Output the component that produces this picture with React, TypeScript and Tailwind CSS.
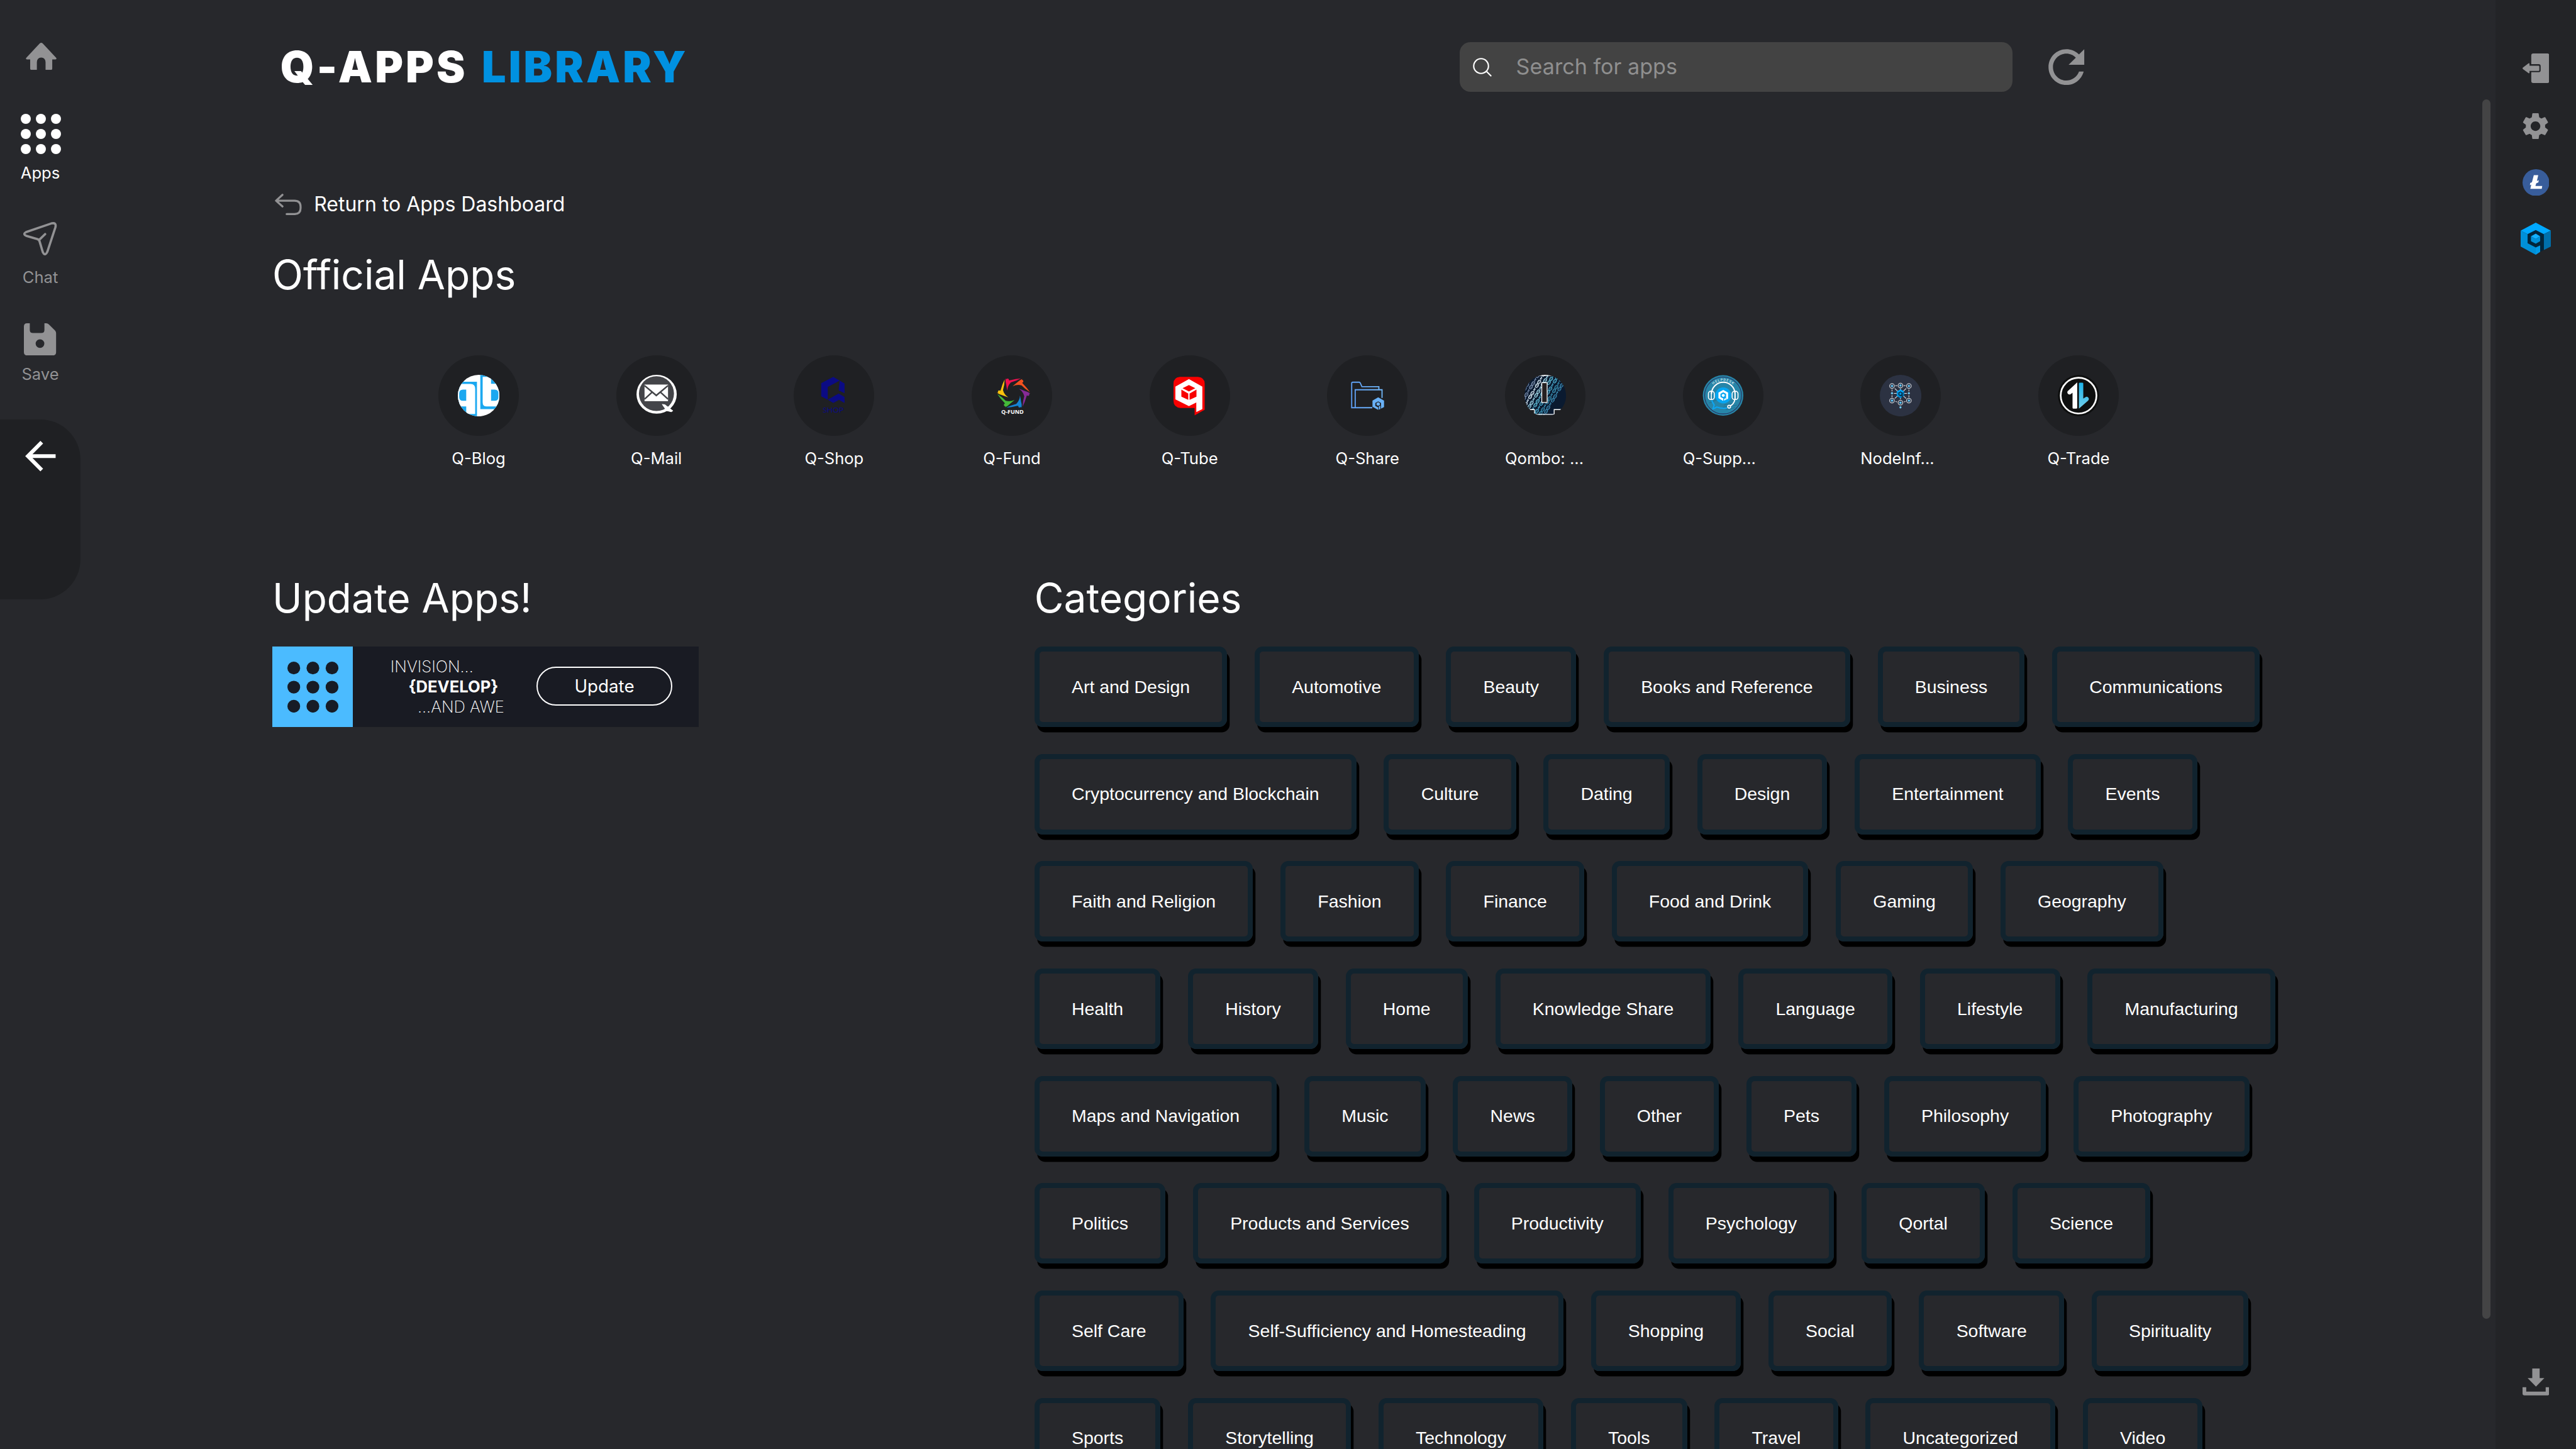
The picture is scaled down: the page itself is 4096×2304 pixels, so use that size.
import React from "react";

/*
 * The layout is designed on a 1920 x 1080 grid. The spacing unit set on the
 * root element makes one Tailwind spacing step equal to one grid pixel.
 */

const categories = [
  "Art and Design",
  "Automotive",
  "Beauty",
  "Books and Reference",
  "Business",
  "Communications",
  "Cryptocurrency and Blockchain",
  "Culture",
  "Dating",
  "Design",
  "Entertainment",
  "Events",
  "Faith and Religion",
  "Fashion",
  "Finance",
  "Food and Drink",
  "Gaming",
  "Geography",
  "Health",
  "History",
  "Home",
  "Knowledge Share",
  "Language",
  "Lifestyle",
  "Manufacturing",
  "Maps and Navigation",
  "Music",
  "News",
  "Other",
  "Pets",
  "Philosophy",
  "Photography",
  "Politics",
  "Products and Services",
  "Productivity",
  "Psychology",
  "Qortal",
  "Science",
  "Self Care",
  "Self-Sufficiency and Homesteading",
  "Shopping",
  "Social",
  "Software",
  "Spirituality",
  "Sports",
  "Storytelling",
  "Technology",
  "Tools",
  "Travel",
  "Uncategorized",
  "Video",
];

/* ---------- Navigation icons ---------- */

function HomeIcon() {
  return (
    <svg viewBox="0 0 23 20.3" className="h-20.25 w-23 fill-[#929294]">
      <path d="M11.5 0 Q12 0 12.6 .5 L22.7 11.3 Q23.3 12.3 22.2 12.4 H19.75 V19.3 Q19.75 20.3 18.75 20.3 H14.75 V14.6 Q14.6 11 11.5 11 Q8.4 11 8.25 14.6 V20.3 H4.25 Q3.25 20.3 3.25 19.3 V12.4 H.8 Q-.3 12.3 .3 11.3 L10.4 .5 Q11 0 11.5 0Z" />
    </svg>
  );
}

function DotGrid({ className }: { className: string }) {
  const steps = [0, 11.25, 22.5];
  return (
    <svg viewBox="0 0 30 30" className={className}>
      {steps.map((y) =>
        steps.map((x) => <circle key={`${x}-${y}`} cx={x + 3.75} cy={y + 3.75} r="3.75" />)
      )}
    </svg>
  );
}

function ChatIcon() {
  return (
    <svg viewBox="0 0 25 25" className="size-25 fill-none stroke-[#929294]" strokeWidth="1.7" strokeLinejoin="round" strokeLinecap="round">
      <path d="M2.1 7.5 L20.8 1.1 Q25 .1 23.9 4.1 L17.9 22.3 Q16.3 25.7 14.6 22.6 L12.2 14.6 Q11.8 13.2 10.6 12.8 L2.2 10.3 Q-.6 8.9 2.1 7.5Z M11.9 13.3 L16.3 9" />
    </svg>
  );
}

function SaveIcon() {
  return (
    <svg viewBox="0 0 24 24" className="size-24 fill-[#929294]" fillRule="evenodd">
      <path d="M2.4 0 H4.4 V5 Q4.4 7.3 6.8 7.3 H12.9 Q15.3 7.3 15.3 5 V0 H16.6 Q17.8 0 18.7 .9 L23.2 5.4 Q24 6.2 24 7.4 V21.6 Q24 24 21.6 24 H2.4 Q0 24 0 21.6 V2.4 Q0 0 2.4 0Z M12 11.9 a3.25 3.25 0 1 0 0 6.5 a3.25 3.25 0 1 0 0 -6.5Z" />
    </svg>
  );
}

function BackArrow() {
  return (
    <svg viewBox="0 0 24 24" className="size-34 fill-white">
      <path d="M20 11H7.83l5.59-5.59L12 4l-8 8 8 8 1.41-1.41L7.83 13H20v-2z" />
    </svg>
  );
}

function ReturnIcon() {
  return (
    <svg viewBox="0 0 20 16" className="h-16 w-20 fill-none stroke-[#929294]" strokeWidth="1.5" strokeLinecap="round" strokeLinejoin="round">
      <path d="M5.7 .8 L.9 5.2 L5.7 9.5 M.9 5.2 H14.6 Q19.2 5.2 19.2 9.6 V10.8 Q19.2 15.2 14.6 15.2 H8.8" />
    </svg>
  );
}

function SearchIcon() {
  return (
    <svg viewBox="0 0 14 14" className="size-14 fill-none stroke-white" strokeWidth="1" strokeLinecap="round">
      <circle cx="6.1" cy="6.1" r="5.5" />
      <path d="M10 10 L13.4 13.4" />
    </svg>
  );
}

function RefreshIcon() {
  return (
    <svg viewBox="0 0 24 24" className="size-40 fill-[#929294]">
      <path d="M17.65 6.35C16.2 4.9 14.21 4 12 4c-4.42 0-7.99 3.58-7.99 8s3.57 8 7.99 8c3.73 0 6.84-2.55 7.73-6h-2.08c-.82 2.33-3.04 4-5.65 4-3.31 0-6-2.69-6-6s2.69-6 6-6c1.66 0 3.14.69 4.22 1.78L13 11h7V4l-2.35 2.35z" />
    </svg>
  );
}

function LogoutIcon() {
  return (
    <svg viewBox="0 0 20 22" className="h-22 w-20 fill-[#929294]">
      <path d="M8 0 H18.5 Q20 0 20 1.5 V20.5 Q20 22 18.5 22 H8 Q6.5 22 6.5 20.5 V14 H12.1 Q13.5 14 13.5 12.6 V9.4 Q13.5 8 12.1 8 H6.5 V1.5 Q6.5 0 8 0Z" />
      <path d="M.25 10.5 L4.4 7.4 Q5.2 7 5.2 7.8 V9.2 H12 Q12.5 9.2 12.5 9.7 V12.5 Q12.5 13 12 13 H5.2 V14.2 Q5.2 15 4.4 14.7 L.25 11.6 Q-.2 11 .25 10.5Z" />
    </svg>
  );
}

function SettingsIcon() {
  return (
    <svg viewBox="0 0 24 24" className="size-24 fill-[#929294]">
      <path d="M19.14 12.94c.04-.3.06-.61.06-.94 0-.32-.02-.64-.07-.94l2.03-1.58c.18-.14.23-.41.12-.61l-1.92-3.32c-.12-.22-.37-.29-.59-.22l-2.39.96c-.5-.38-1.03-.7-1.62-.94l-.36-2.54c-.04-.24-.24-.41-.48-.41h-3.84c-.24 0-.43.17-.47.41l-.36 2.54c-.59.24-1.13.57-1.62.94l-2.39-.96c-.22-.08-.47 0-.59.22L2.74 8.87c-.12.21-.08.47.12.61l2.03 1.58c-.05.3-.09.63-.09.94s.02.64.07.94l-2.03 1.58c-.18.14-.23.41-.12.61l1.92 3.32c.12.22.37.29.59.22l2.39-.96c.5.38 1.03.7 1.62.94l.36 2.54c.05.24.24.41.48.41h3.84c.24 0 .44-.17.47-.41l.36-2.54c.59-.24 1.13-.56 1.62-.94l2.39.96c.22.08.47 0 .59-.22l1.92-3.32c.12-.22.07-.47-.12-.61l-2.01-1.58zM12 15.6c-1.98 0-3.6-1.62-3.6-3.6s1.62-3.6 3.6-3.6 3.6 1.62 3.6 3.6-1.62 3.6-3.6 3.6z" />
    </svg>
  );
}

function LitecoinIcon() {
  return (
    <svg viewBox="0 0 20 20" className="size-20">
      <circle cx="10" cy="10" r="10" fill="#385d9b" />
      <path fill="#fff" d="M8.4 4.5 H11.7 L10.7 8.8 L12.1 8.2 L11.8 9.8 L10.2 10.5 L9.6 12.6 H14.7 L14.3 14.7 H5.8 L6.5 11.5 L5.5 11.9 L5.7 10.3 L7 9.7Z" />
    </svg>
  );
}

function QortalShapes() {
  return (
    <g>
      <path fill="#02253b" d="M5.2 8.6 L11.3 5.3 L17.4 8.6 V20.4 L14.6 21.9 V17 L11.3 18.7 L5.2 15.4Z" />
      <path fill="#00a8ff" d="M0 6 L11.3 0 L22.6 6 L17.3 8.6 L11.3 5.5 L5.2 8.6Z" />
      <path fill="#0090d8" d="M0 6 L5.2 8.6 V15.4 L11.3 18.6 V24 L0 17.8Z" />
      <path fill="#009ae8" d="M11.3 18.6 L14.6 17 V21.9 L11.3 24Z" />
      <path fill="#0070ac" d="M22.6 6 V17.8 L17.4 20.4 V8.6Z" />
      <path fill="#12b0ff" d="M7.7 10.2 L11.3 8.2 L14.6 10.2 L11.3 12.2Z" />
      <path fill="#0090d8" d="M7.7 10.2 L11.3 12.2 L14.6 10.2 V13.8 L11.3 15.7 L7.7 13.8Z" />
    </g>
  );
}

function QortalIcon() {
  return (
    <svg viewBox="0 0 22.6 24" className="h-24 w-22.5">
      <QortalShapes />
    </svg>
  );
}

function DownloadIcon() {
  return (
    <svg viewBox="0 0 20 20" className="size-20 fill-[#929294]">
      <path d="M7.25 0 H12.75 V7.2 H16.25 L10 13.5 L3.8 7.2 H7.25Z" />
      <path d="M0 14 H2.75 V17.25 H17.25 V14 H20 V18.6 Q20 20 18.6 20 H1.4 Q0 20 0 18.6Z" />
    </svg>
  );
}

/* ---------- App logos, each drawn on a 124 x 124 field ---------- */

function Logo({ children }: { children: React.ReactNode }) {
  return (
    <svg viewBox="0 0 124 124" className="size-31">
      {children}
    </svg>
  );
}

function BlogLogo() {
  return (
    <Logo>
      <clipPath id="blog-clip">
        <circle cx="62" cy="62" r="62" />
      </clipPath>
      <g clipPath="url(#blog-clip)">
        <rect width="124" height="124" fill="#fff" />
        <path fill="#1ba8f0" d="M0 20.7 H57 V124 H0Z" />
        <path fill="#fff" d="M0 27.3 H38 Q51.7 27.3 51.7 42 V116.5 H25 V94 H0Z" />
        <path fill="#1ba8f0" d="M25 44.3 H15 Q4 44.3 4 56 V66 Q4 77.3 15 77.3 H25Z" />
        <path fill="#1ba8f0" d="M67 0 H124 V102.3 H67Z" />
        <path fill="#fff" d="M74 6.3 H99 V26.7 H124 V94.3 H86 Q74 94.3 74 82Z" />
        <path fill="#1ba8f0" d="M99 44.3 H110 Q121 44.3 121 56 V66 Q121 77.3 110 77.3 H99Z" />
      </g>
    </Logo>
  );
}

function MailLogo() {
  return (
    <Logo>
      <ellipse cx="62" cy="58" rx="60" ry="58" fill="#fff" />
      <ellipse cx="61.5" cy="56" rx="52.3" ry="52" fill="#444549" />
      <rect x="26" y="29" width="70" height="49.5" fill="#fff" />
      <path d="M26 32 L61 61.5 L96 32 M26 72.5 L49 51.5 M96 72.5 L73 51.5" fill="none" stroke="#444549" strokeWidth="4.6" />
      <path d="M79 88 L86 89 L110 107 L106 110 L92 107Z" fill="#fff" stroke="#fff" strokeWidth="2" strokeLinejoin="round" />
    </Logo>
  );
}

function ShopLogo() {
  return (
    <Logo>
      <g fill="#0b0b84">
        <path d="M60 6 L79 17.5 L43.5 36 V74 L24 64 V25Z" />
        <path d="M79 17.5 L93.5 26 V55 L76 46Z" />
        <path d="M43.5 74 L76 56 L93.5 66 V84 L77 74.5 L60 84Z" />
        <text x="28.5" y="112" fontSize="22.5" textLength="62" lengthAdjust="spacingAndGlyphs" className="font-['Lato']">
          SHOP
        </text>
      </g>
    </Logo>
  );
}

const fundFigures = [
  { color: "#ee1150", turn: 0 },
  { color: "#f4511e", turn: 60 },
  { color: "#862a96", turn: 120 },
  { color: "#1583d3", turn: 180 },
  { color: "#43b93a", turn: 240 },
  { color: "#fcc20d", turn: 300 },
];

function FundLogo() {
  return (
    <Logo>
      {fundFigures.map((figure) => (
        <g key={figure.color} fill={figure.color} transform={`rotate(${figure.turn} 67 54.5)`}>
          <circle cx="49" cy="15.5" r="4.2" />
          <path d="M89 11 Q72 12 58 16 Q48 19 43 11 Q42 22 45 30 Q46 38 48 47 Q49 32 59 22.5 Q74 19 89 11Z" />
        </g>
      ))}
      <text x="30" y="116.8" fill="#fff" fontSize="16.5" fontWeight="700" textLength="67" lengthAdjust="spacingAndGlyphs" className="font-['Open_Sans']">
        Q-FUND
      </text>
    </Logo>
  );
}

function TubeLogo() {
  return (
    <Logo>
      <path fill="#f80000" d="M32 6 H86 Q106 8 106 26 V104 L76 121 V99 H34 Q13 97 13 78 V26 Q13 8 32 6Z" />
      <path fill="#fff" d="M59 12.7 L99 35 V102 L81 111 V82.7 L59 93.5 L18.6 73 V35Z" />
      <path fill="#f80000" d="M59 30.5 L78 40 L59 49.5 L40 40Z M36.5 44 L57 55.7 V74.5 L36.5 65Z M81.5 44 L61 55.7 V74.5 L81.5 65Z" />
    </Logo>
  );
}

function ShareLogo() {
  return (
    <Logo>
      <linearGradient id="share-stroke" x1="0" y1="0" x2="124" y2="0" gradientUnits="userSpaceOnUse">
        <stop offset="0" stopColor="#5c9cf5" />
        <stop offset="1" stopColor="#74bcfa" />
      </linearGradient>
      <g fill="none" stroke="url(#share-stroke)" strokeWidth="3.4">
        <path d="M77 98 H15.5 V25 Q15.5 22 18.5 22 H38 Q40 22 41 24 L46 35.5 H96.5 V44" />
        <path d="M26 98 V44.5 H106 V69" />
      </g>
      <path fill="#69b1f7" fillRule="evenodd" d="M94.5 67 L112 77 V96 L103 101 V84 L94.5 79 L86 84 V93 L94.5 97 V104.5 L77.5 95 V77Z" />
      <path fill="#69b1f7" d="M94.5 81.5 L99.5 84.5 V90 L94.5 92.5 L89.5 90 V84.5Z M96.5 94 L101 92 V101.5 L96.5 104Z" />
    </Logo>
  );
}

const chainLines = [
  { x: -26, tint: "#6f83a6" },
  { x: -13, tint: "#8396b5" },
  { x: 0, tint: "#e6f6ff" },
  { x: 13, tint: "#a9e3f2" },
  { x: 26, tint: "#63c6e0" },
  { x: 39, tint: "#4fb4d6" },
  { x: 52, tint: "#3c96b8" },
  { x: 63, tint: "#3f8fb8" },
];

function QomboLogo() {
  const links = [0, 1, 2, 3, 4, 5, 6, 7, 8, 9, 10, 11, 12];
  return (
    <Logo>
      <clipPath id="qombo-round">
        <circle cx="62" cy="62" r="62" />
      </clipPath>
      <clipPath id="qombo-body">
        <path d="M0 0 H124 V105 H90 V120 H28.5 V105 H0Z" />
      </clipPath>
      <g clipPath="url(#qombo-round)">
        <g clipPath="url(#qombo-body)">
          <rect width="124" height="124" fill="#0a1a30" />
          <g transform="translate(54 4) rotate(31)" fill="none" strokeWidth="2.2">
            {chainLines.map((line, row) =>
              links.map((link) =>
                (link + row) % 3 === 2 ? (
                  <path key={`${row}-${link}`} stroke={line.tint} d={`M${line.x - 3} ${link * 13 - 36} l4 3 l-3 3 l4 3`} />
                ) : (
                  <g key={`${row}-${link}`} stroke={line.tint}>
                    <ellipse cx={line.x} cy={link * 13 - 32} rx="3.8" ry="5.6" />
                    <path d={`M${line.x - 1} ${link * 13 - 33} l2 2`} />
                  </g>
                )
              )
            )}
          </g>
          <rect x="0" y="0" width="124" height="3.2" fill="#fff" />
          <path d="M0 103.5 H29.7 V118 H88.5 V103.5 H124" fill="none" stroke="#fff" strokeWidth="2.6" />
        </g>
        <rect x="51.6" y="23.4" width="16" height="59" fill="#242021" stroke="#fff" strokeWidth="2.4" />
      </g>
    </Logo>
  );
}

function SupportLogo() {
  return (
    <Logo>
      <circle cx="61.5" cy="61.5" r="60.5" fill="#2785a8" />
      <circle cx="61.5" cy="61.5" r="55" fill="none" stroke="#28305c" strokeWidth="2" />
      <path d="M64 90 L96 84 M60 97 L104 90 M70 104 L98 98 M20 84 L44 74" stroke="#1c6a8c" strokeWidth="1.4" />
      <path id="helpdesk-arc" d="M17.5 62 A44 44 0 0 1 105.5 62" fill="none" />
      <text fill="#fff" fontSize="10" textAnchor="middle" className="font-['Roboto']">
        <textPath href="#helpdesk-arc" startOffset="50%" textLength="64">
          HELPDESK
        </textPath>
      </text>
      <path d="M27 48 V57 A35 35 0 0 1 97 57 V72 Q94 88 82 93" fill="none" stroke="#fff" strokeWidth="3.6" />
      <g fill="none" stroke="#fff" strokeWidth="3">
        <rect x="17.8" y="49" width="17.5" height="24.5" rx="7" />
        <path d="M26.5 49 V73" />
        <rect x="88.5" y="49" width="17.5" height="24.5" rx="7" />
        <path d="M97.3 49 V73" />
        <circle cx="79.5" cy="95" r="4.2" fill="#2785a8" />
      </g>
      <path d="M27.5 76 Q32 86 35 90 L31 102 Q40 98 43 96 Q56 101 73 99" fill="none" stroke="#0ea5f0" strokeWidth="4" strokeLinejoin="round" />
      <circle cx="62" cy="61.3" r="24" fill="#06a6f2" />
      <path fill="#fff" d="M62 45 L76.5 53 V71 L70.5 74.5 V56.5 L62 52 L53.7 56.5 V66 L62 70.5 V78 L47.7 69.5 V53Z M64.5 72 L69.5 69 V74.5 L64.5 77Z" />
      <path fill="#fff" d="M62 56.5 L66.3 59 V63.5 L62 66 L57.7 63.5 V59Z" />
    </Logo>
  );
}

const nodeRings = [
  [36.4, 33.3],
  [61.6, 31.7],
  [86.7, 33.3],
  [36.4, 76.7],
  [61.6, 83],
  [86.7, 76.7],
];

function NodeLogo() {
  return (
    <Logo>
      <circle cx="62" cy="62" r="62" fill="#2c3242" />
      <path
        d="M46 32.5 H52 M71 32.5 H77 M36.4 43.5 V49 M36.4 61 V67 M86.7 43.5 V49 M86.7 61 V67 M42 55.5 H51 M72 55.5 H81 M61.6 41 V46 M61.6 69 V73 M44.5 40.5 L53 48.5 M78.7 40.5 L70.3 48.5 M44.5 70.5 L53 63 M78.7 70.5 L70.3 63 M46.5 79 L51.5 81 M77 79 L72 81"
        stroke="#e9edf2"
        strokeWidth="1.9"
      />
      {nodeRings.map(([x, y]) => (
        <g key={`${x}-${y}`}>
          <circle cx={x} cy={y} r="7" fill="#2c3242" stroke="#e9edf2" strokeWidth="1.9" />
          <circle cx={x} cy={y} r="3.5" fill="#5ec1f2" />
        </g>
      ))}
      <g fill="#6fcbf5">
        <circle cx="36.4" cy="54.7" r="3.2" />
        <circle cx="86.7" cy="54.7" r="3.2" />
        <circle cx="61.6" cy="97" r="3.1" />
      </g>
      <g transform="translate(50.3 43.3) scale(1 1.1)">
        <QortalShapes />
      </g>
    </Logo>
  );
}

function TradeLogo() {
  return (
    <Logo>
      <linearGradient id="trade-down" x1="0" y1="0" x2="0" y2="1">
        <stop offset="0" stopColor="#1fb4ea" />
        <stop offset="1" stopColor="#70cce8" />
      </linearGradient>
      <circle cx="62" cy="62" r="61.5" fill="#0e0f0f" />
      <circle cx="62" cy="62" r="53.3" fill="none" stroke="#fff" strokeWidth="5" />
      <path fill="#fff" d="M58 22.3 V98 Q58 101 55 101 H47 Q44 101 44 98 V53.5 L37.5 58 Q32 60.5 29 55 Q27 50 32 46.5Z" />
      <path fill="url(#trade-down)" d="M63 101 V26 Q63 23.3 66 23.3 H73 Q76 23.3 76 26 V71 L83.5 66 Q88 64 91.5 68.5 Q94.5 73 90 77.5Z" />
    </Logo>
  );
}

const officialApps: { name: string; clipped?: boolean; logo: React.ReactNode }[] = [
  { name: "Q-Blog", logo: <BlogLogo /> },
  { name: "Q-Mail", logo: <MailLogo /> },
  { name: "Q-Shop", logo: <ShopLogo /> },
  { name: "Q-Fund", logo: <FundLogo /> },
  { name: "Q-Tube", logo: <TubeLogo /> },
  { name: "Q-Share", logo: <ShareLogo /> },
  { name: "Qombo: ...", clipped: true, logo: <QomboLogo /> },
  { name: "Q-Supp...", clipped: true, logo: <SupportLogo /> },
  { name: "NodeInf...", clipped: true, logo: <NodeLogo /> },
  { name: "Q-Trade", logo: <TradeLogo /> },
];

/* ---------- Page sections ---------- */

function LeftRail() {
  return (
    <aside className="flex w-60 shrink-0 flex-col items-center pt-31.75 text-[25.6px] leading-16 text-[#929294]">
      <div className="ml-1">
        <HomeIcon />
      </div>
      <div className="mt-33 ml-1">
        <DotGrid className="size-30 fill-white" />
      </div>
      <span className="mt-5.75 text-white">Apps</span>
      <div className="mt-28.75">
        <ChatIcon />
      </div>
      <span className="mt-8.5">Chat</span>
      <div className="mt-25.75">
        <SaveIcon />
      </div>
      <span className="mt-6">Save</span>
      <div className="mt-26 flex h-134 w-full justify-center rounded-r-[64px] bg-[#1f2023] pt-10.25">
        <BackArrow />
      </div>
    </aside>
  );
}

function RightRail() {
  return (
    <aside className="flex w-60 shrink-0 flex-col items-center gap-20 bg-[#232427] py-40">
      <LogoutIcon />
      <SettingsIcon />
      <LitecoinIcon />
      <QortalIcon />
      <div className="mt-auto">
        <DownloadIcon />
      </div>
    </aside>
  );
}

function Header() {
  return (
    <header className="flex h-100 shrink-0 items-center">
      <h1 className="flex w-884.75 shrink-0 gap-10.5 pl-6 text-[68.267px] leading-40 font-black tracking-[4.1px]">
        <span>Q-APPS</span>
        <span className="text-[#0091e1]">LIBRARY</span>
      </h1>
      <label className="flex h-37 w-412.5 items-center gap-18 rounded-[17px] bg-[#434343] pl-10.25">
        <SearchIcon />
        <span className="text-[34.133px] leading-20 text-[#8f8f8f]">Search for apps</span>
      </label>
      <button className="ml-19.75">
        <RefreshIcon />
      </button>
    </header>
  );
}

function UpdateCard() {
  return (
    <div className="flex h-60 w-318 bg-[#191b23] text-[25.6px] leading-15">
      <div className="flex size-60 items-center justify-center bg-[#4bbbff]">
        <DotGrid className="size-38 fill-[#171c26]" />
      </div>
      <div className="flex w-137 flex-col pt-7.25 font-extralight">
        <span className="pl-28">INVISION...</span>
        <span className="pl-41.5 font-bold">{"{DEVELOP}"}</span>
        <span className="pl-48.25">...AND AWE</span>
      </div>
      <button className="mt-15 h-29 w-101 rounded-full border-[2.133px] border-white text-[27.733px]">Update</button>
    </div>
  );
}

export default function App() {
  return (
    <div className="flex h-[2304px] w-[4096px] overflow-hidden bg-[#27282c] font-['Inter',sans-serif] text-white [--spacing:2.13333px]">
      <LeftRail />
      <main className="flex min-w-0 flex-1">
        <div className="flex w-1790 shrink-0 flex-col pl-143">
          <Header />
          <div className="mt-40.25 flex h-24 shrink-0 items-center gap-9 pl-2">
            <ReturnIcon />
            <span className="text-[32px] leading-24">Return to Apps Dashboard</span>
          </div>
          <h2 className="mt-22.75 text-[64px] leading-36">Official Apps</h2>
          <div className="mt-42 flex shrink-0 pl-87.5">
            {officialApps.map((app) => (
              <div key={app.name} className="flex w-132.5 flex-col items-center">
                <div className="flex size-60 items-center justify-center rounded-full bg-[#1f2023]">{app.logo}</div>
                <span
                  className={
                    app.clipped
                      ? "mt-8.75 w-60 text-[25.6px] leading-16 whitespace-nowrap"
                      : "mt-8.75 text-[25.6px] leading-16 whitespace-nowrap"
                  }
                >
                  {app.name}
                </span>
              </div>
            ))}
          </div>
          <div className="mt-78.25 flex shrink-0">
            <section className="w-568">
              <h2 className="mb-18 text-[64px] leading-36">Update Apps!</h2>
              <UpdateCard />
            </section>
            <section className="w-940">
              <h2 className="mb-18 text-[64px] leading-36">Categories</h2>
              <div className="flex flex-wrap gap-x-20.5 gap-y-20">
                {categories.map((category) => (
                  <button
                    key={category}
                    className="h-60 rounded-[12.8px] border-[8.533px] border-[#11232e] px-24 font-['Liberation_Sans',Arial,sans-serif] text-[28.444px] whitespace-nowrap shadow-[4.267px_8.533px_0_0_#000]"
                  >
                    {category}
                  </button>
                ))}
              </div>
            </section>
          </div>
        </div>
        <div className="mt-74 h-909 w-6.25 rounded-full bg-[#444445]" />
      </main>
      <RightRail />
    </div>
  );
}
